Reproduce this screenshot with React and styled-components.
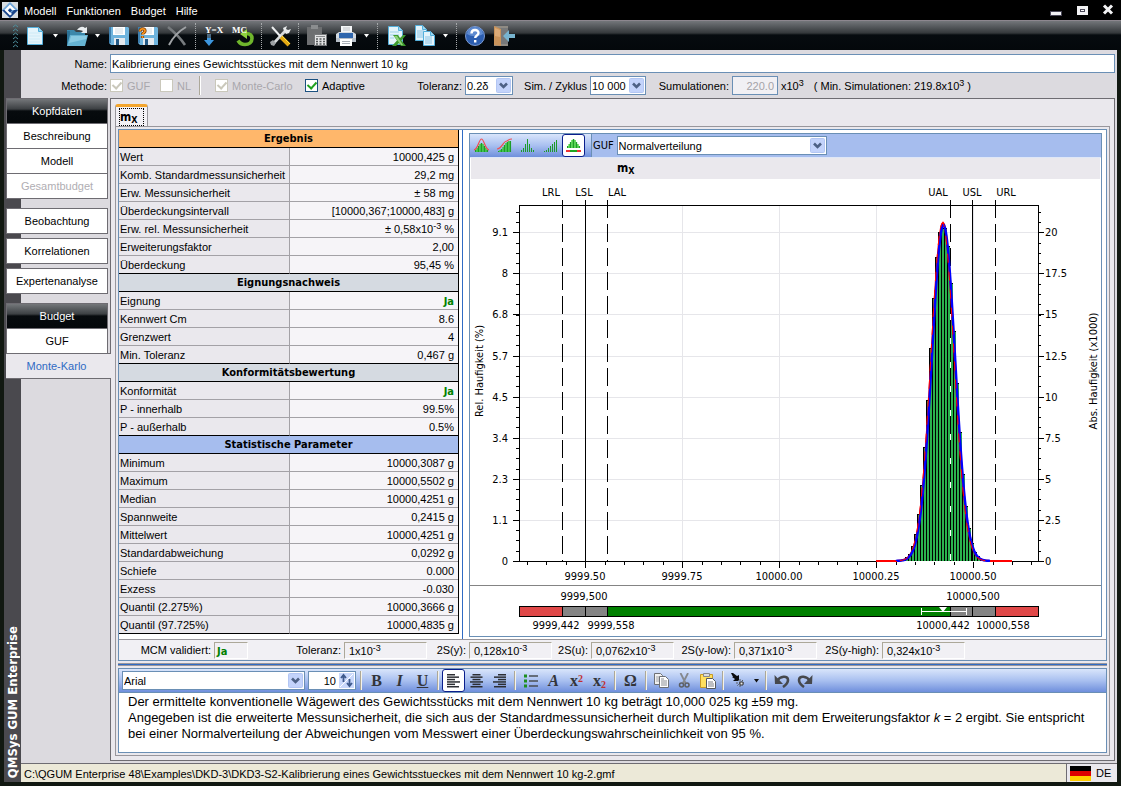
import React from "react";
import styled, { createGlobalStyle, css } from "styled-components";

const UI = `"Liberation Sans", Arial, sans-serif`;
const WIDE = `"DejaVu Sans Condensed", "Noto Sans", sans-serif`;

const Global = createGlobalStyle`
  * { box-sizing: border-box; }
  body { margin: 0; background: #111811; }
  body, button, input, select, table { font-family: ${UI}; font-size: 11px; line-height: 14px; color: #000; }
  button { cursor: pointer; }
  sup, sub { font-size: 9px; line-height: 0; }
  sup { vertical-align: 4px; }
  sub { vertical-align: -2px; }
`;

/* ---------- window ---------- */

const Window = styled.div`
  min-height: 100vh;
  min-width: 1060px;
  display: flex;
  flex-direction: column;
  background: #111811;
`;

const MenuBar = styled.header`
  height: 20px;
  display: flex;
  align-items: center;
  background: #000;
  padding: 0 6px 0 2px;
`;

const MenuList = styled.nav`
  flex: 1;
  display: flex;
  gap: 10px;
  padding: 1px 0 0 6px;
`;

const MenuItem = styled.button`
  border: 0;
  padding: 0;
  background: none;
  color: #fff;
  white-space: nowrap;
`;

const WindowButtons = styled.div`
  display: flex;
  gap: 12px;
`;

const WindowButton = styled.button`
  border: 0;
  padding: 0;
  background: none;
  width: 14px;
  height: 14px;
  svg { display: block; }
`;

const MainToolbar = styled.div`
  height: 30px;
  display: flex;
  align-items: center;
  padding-left: 10px;
  border-top: 1px solid #8d878f;
  background: linear-gradient(#73767a 0, #34383b 12px, #060b0f 14px, #04080b 100%);
`;

const Grip = styled.svg`
  width: 10px;
  height: 26px;
`;

const ToolButton = styled.button`
  border: 0;
  padding: 0;
  background: none;
  width: ${(p) => (p.$caret ? 13 : 29)}px;
  height: 28px;
  display: flex;
  align-items: center;
  justify-content: center;
`;

const DotSeparator = styled.span`
  width: 8px;
  height: 26px;
  display: flex;
  justify-content: center;
  &::before {
    content: "";
    border-left: 1px dotted #a5a8aa;
  }
`;

const Body = styled.div`
  flex: 1;
  display: flex;
  margin: 0 4px 4px;
`;

const Rail = styled.div`
  flex: none;
  width: 17px;
  display: flex;
  align-items: flex-end;
  justify-content: center;
  background: #4a494e;
  padding-bottom: 4px;
`;

const RailLabel = styled.span`
  writing-mode: vertical-rl;
  transform: rotate(180deg);
  color: #fff;
  font-family: ${WIDE};
  font-weight: bold;
  font-size: 13px;
  white-space: nowrap;
`;

const Content = styled.div`
  flex: 1;
  min-width: 0;
  display: flex;
  flex-direction: column;
  background: #dcdadf;
`;

/* ---------- form ---------- */

const NameRow = styled.div`
  display: flex;
  align-items: center;
  padding: 4px 2px 3px 0;
`;

const FormLabel = styled.label`
  flex: none;
  width: 89px;
  padding-right: 3px;
  text-align: right;
`;

const TextInput = styled.input`
  height: 19px;
  min-width: 0;
  flex: ${(p) => (p.$fixed ? "none" : 1)};
  width: ${(p) => (p.$fixed ? "46px" : "auto")};
  border: 1px solid #6a8fb5;
  background: #fff;
  padding: 1px 1px 0;
  &:disabled {
    background: #f1f0f4;
    color: #a5a3a8;
    text-align: right;
    padding-right: 3px;
  }
`;

const MethodRow = styled.div`
  display: grid;
  grid-template-columns: 89px 50px 39px 16px 90px 96px 112px 133px 132px 1fr;
  height: 19px;
  align-items: center;
  margin-bottom: 3px;
  white-space: nowrap;
`;

const CheckLabel = styled.label`
  display: flex;
  align-items: center;
  gap: 4px;
  color: ${(p) => (p.$off ? "#a9a7ac" : "#000")};
`;

const CheckBox = styled.input.attrs({ type: "checkbox" })`
  appearance: none;
  margin: 0;
  width: 13px;
  height: 13px;
  border: 1px solid #1c5180;
  background: #fff;
  display: grid;
  place-items: center;
  &:checked::before {
    content: "";
    width: 4px;
    height: 7px;
    margin-top: -2px;
    border: solid #21a121;
    border-width: 0 2px 2px 0;
    transform: rotate(42deg);
  }
  &:disabled { border-color: #cac8bb; }
  &:disabled:checked::before { border-color: #cac8bb; }
`;

const ThinSeparator = styled.span`
  justify-self: start;
  height: 19px;
  width: 2px;
  background: #aca899;
  border-right: 1px solid #fff;
`;

const Field = styled.label`
  display: flex;
  align-items: center;
  justify-content: flex-end;
  gap: 3px;
`;

const SelectBox = styled.span`
  position: relative;
  flex: none;
  display: block;
  width: ${(p) => p.$width}px;
  height: 19px;
  select {
    appearance: none;
    width: 100%;
    height: 100%;
    border: 1px solid #6a8fb5;
    border-radius: 0;
    background: #fff;
    padding: 1px 1px 0;
  }
  svg {
    position: absolute;
    right: 2px;
    top: 2px;
    pointer-events: none;
  }
`;

const Remarks = styled.div`
  display: flex;
  gap: 10px;
  padding-left: 3px;
`;

/* ---------- side navigation ---------- */

const Workspace = styled.div`
  flex: 1;
  display: flex;
  padding-right: 2px;
  margin-bottom: 2px;
`;

const SideNav = styled.nav`
  position: relative;
  z-index: 1;
  flex: none;
  width: 102px;
  margin: 0 2px 0 -15px;
`;

const NavGroup = styled.div`
  display: flex;
  flex-direction: column;
  border: 1px solid #6e6c72;
  margin-bottom: ${(p) => (p.$tight ? 4 : 9)}px;
  background: #fff;
  ${(p) => p.$open && "border-bottom: 0;"}
`;

const NavHeader = styled.h2`
  margin: 0;
  height: 24px;
  font-size: 11px;
  font-weight: normal;
  line-height: 24px;
  text-align: center;
  color: #fff;
  background: linear-gradient(#74777a, #3c4043 10px, #070b0e 12px, #04080b);
`;

const NavButton = styled.button`
  border: 0;
  border-top: ${(p) => (p.$first ? 0 : 1)}px solid #6e6c72;
  padding: 0;
  height: ${(p) => (p.$first ? 24 : 25)}px;
  background: #fff;
  &:disabled { color: #b0aeb3; }
  ${(p) =>
    p.$current &&
    css`
      height: 26px;
      margin: 0 -4px 0 -1px;
      padding-right: 4px;
      border-bottom: 1px solid #6e6c72;
      background: #eae8ed;
      color: #2f6bc4;
    `}
`;

/* ---------- main panel ---------- */

const Panel = styled.main`
  flex: 1;
  min-width: 0;
  display: flex;
  flex-direction: column;
  border: 1px solid #6e6c72;
  background: #eae8ed;
  padding: 5px 4px 4px;
`;

const Tab = styled.button`
  align-self: flex-start;
  width: 33px;
  height: 22px;
  border: 1px solid #98969c;
  border-top: 3px solid #f3a52e;
  border-bottom: 0;
  border-radius: 3px 3px 0 0;
  background: #f3f1f6;
  padding: 1px 3px 1px;
  span {
    display: block;
    border: 1px dotted #000;
    font-family: ${WIDE};
    font-size: 12px;
    font-weight: bold;
    height: 18px;
    line-height: 16px;
    text-align: left;
  }
`;

const TabPage = styled.section`
  flex: 1;
  display: flex;
  flex-direction: column;
  border: 1px solid #98969c;
  padding: 2px;
`;

const ResultBox = styled.div`
  border: 1px solid #6a8fb5;
  background: #fff;
`;

const ResultRow = styled.div`
  display: flex;
  align-items: stretch;
`;

const VerticalSplitter = styled.div`
  flex: none;
  width: 3px;
  margin-left: 2px;
  border: solid;
  border-width: 0 1px;
  border-color: #c9d3e6 #fff;
  background: #2f6bc4;
`;

const DataTable = styled.table`
  flex: none;
  align-self: flex-start;
  width: 340px;
  table-layout: fixed;
  border-collapse: separate;
  border-spacing: 0;
  border-right: 1px solid #000;
  col:first-child { width: 171px; }
`;

const GroupHead = styled.th`
  height: 18px;
  padding: 0;
  border-bottom: 1px solid #000;
  background: ${(p) => p.$tone};
  font-family: ${WIDE};
  text-align: center;
`;

const Cell = css`
  height: 18px;
  padding: 1px 1px 0;
  border-bottom: 1px solid #a3a1a6;
  white-space: nowrap;
  line-height: 14px;
  tr:last-child > & { border-bottom-color: #000; }
`;

const NameCell = styled.th`
  ${Cell}
  font-weight: normal;
  text-align: left;
  border-right: 1px solid #a3a1a6;
  background: #eae8ed;
`;

const ValueCell = styled.td`
  ${Cell}
  padding-right: 4px;
  text-align: right;
  background: #f6f4f8;
`;

const Verdict = styled.strong`
  font-family: ${WIDE};
  color: #008000;
`;

/* ---------- chart ---------- */

const ChartWrap = styled.div`
  flex: 1;
  min-width: 0;
  padding: 3px 4px 2px 5px;
`;

const ChartFrame = styled.div`
  border: 1px solid #6a8fb5;
`;

const BLUE = "linear-gradient(#d9e5fb, #a9c0f0 50%, #6f8fdc)";

const ChartToolbar = styled.div`
  display: flex;
  align-items: center;
  height: 24px;
  border-bottom: 1px solid #dfe7f7;
  background: #a6bdee;
`;

const ChartButtons = styled.div`
  display: flex;
  height: 23px;
  width: 122px;
  border-right: 1px solid #6a8fb5;
  background: ${BLUE};
`;

const FlatButton = styled.button`
  flex: none;
  width: ${(p) => (p.$caret ? 12 : 23)}px;
  height: 23px;
  display: flex;
  align-items: center;
  justify-content: center;
  border: ${(p) => (p.$active ? "1px solid #0a1e8c" : 0)};
  border-radius: 3px;
  padding: 0;
  background: ${(p) => (p.$active ? "#fff" : "none")};
  color: #33353a;
  font: ${(p) => (p.$italic ? "italic " : "")}bold 16px/20px "Liberation Serif", serif;
  text-decoration: ${(p) => (p.$underline ? "underline" : "none")};
  sup, sub { color: #c03030; font-size: 10px; }
`;

const GufField = styled.label`
  display: flex;
  align-items: center;
  gap: 3px;
  padding-left: 1px;
  font-family: ${WIDE};
`;

const ChartTitle = styled.h3`
  margin: 0 1px;
  height: 21px;
  padding-left: 146px;
  font-family: ${WIDE};
  font-size: 12px;
  line-height: 20px;
  background: #eae8ed;
`;

const Plot = styled.svg`
  display: block;
  width: 100%;
  height: auto;
  font: 11px ${WIDE};
`;

/* ---------- validation strip ---------- */

const ValidationStrip = styled.div`
  display: grid;
  grid-template-columns: 95px 34px 96px 83px 42px 83px 39px 83px 60px 83px 65px 83px;
  align-items: center;
  height: 21px;
  border-top: 1px solid #98969c;
  background: #f1f0f4;
  white-space: nowrap;
  label { text-align: right; padding-right: 3px; }
`;

const Readout = styled.output`
  height: 17px;
  padding: 1px ${(p) => (p.$tight ? 2 : 4)}px 0;
  line-height: 14px;
  border: 1px solid;
  border-color: #aca899 #fff #fff #aca899;
`;

const HorizontalSplitter = styled.div`
  height: 3px;
  margin: 2px 0;
  border: solid;
  border-width: 1px 0;
  border-color: #98969c #fff;
  background: #2f6bc4;
`;

/* ---------- editor ---------- */

const EditorBox = styled.div`
  flex: 1;
  border: 1px solid #6a8fb5;
  background: #fff;
`;

const EditorToolbar = styled.div`
  display: flex;
  align-items: center;
  height: 24px;
  padding-left: 3px;
  border-bottom: 1px solid #6a8fb5;
  background: ${BLUE};
`;

const ToolSeparator = styled.span`
  flex: none;
  width: 2px;
  height: 19px;
  margin: 0 3px;
  background: #aca899;
  border-right: 1px solid #f5f3ea;
`;

const Spinner = styled.label`
  position: relative;
  flex: none;
  width: 48px;
  height: 19px;
  margin: 0 1px 0 3px;
  input {
    width: 100%;
    height: 100%;
    border: 1px solid #6a8fb5;
    padding: 1px 19px 0 0;
    text-align: right;
    background: #fff;
  }
  svg { position: absolute; right: 2px; top: 2px; }
`;

const EditorText = styled.div`
  min-height: 59px;
  padding: 1px 9px 0;
  font: 13px/16px "Liberation Sans", Arial, sans-serif;
  outline: none;
  p { margin: 0; }
`;

/* ---------- status bar ---------- */

const StatusBar = styled.footer`
  display: flex;
  height: 19px;
  border-top: 1px solid #6e6c72;
  background: #ece9d8;
`;

const StatusPath = styled.span`
  flex: 1;
  padding: 3px 3px 0;
`;

const Language = styled.span`
  display: flex;
  align-items: center;
  gap: 5px;
  width: 51px;
  padding-left: 3px;
  border-left: 1px solid #6e6c72;
  background: #eae8ed;
`;

const Flag = styled.span`
  width: 21px;
  height: 15px;
  background: linear-gradient(#000 5px, #dd0000 5px 10px, #ffce00 10px);
`;

/* ---------- icons ---------- */

const Svg = ({ w = 22, h = 22, children }) => (
  <svg width={w} height={h} viewBox={`0 0 ${w} ${h}`} aria-hidden="true">{children}</svg>
);

const Caret = ({ fill = "#fff" }) => <Svg w={7} h={4}><path d="M1 0h5L3.5 3.4z" fill={fill} /></Svg>;

const DropArrow = () => (
  <svg width="15" height="15" viewBox="0 0 15 15" aria-hidden="true">
    <rect x=".5" y=".5" width="14" height="14" rx="1" fill="#c3d3fb" stroke="#b3c6f3" />
    <path d="M4 5.500l3.500 3.500L11 5.500" fill="none" stroke="#4d6185" strokeWidth="2.600" />
  </svg>
);

const AppLogo = () => (
  <Svg w={16} h={16}>
    <rect width="16" height="16" fill="#d5dbe0" />
    <path d="M8 0l8 8-8 8-8-8z" fill="#6fa5d8" />
    <path d="M0 8h4l4 4 4-4h4l-8 8z" fill="#1b4489" />
    <path d="M8 2.500L13.500 8H10L8 6 6 8l4 4-2 1.500L2.500 8z" fill="#fff" />
    <path d="M8 6.500l2 2-2 2-2-2z" fill="#143f86" />
  </Svg>
);

const page = (x, y, w, h) => (
  <g>
    <path d={`M${x + .5} ${y + .5}h${w - 5}l4 4v${h - 5}h-${w - 1}z`} fill="#e4f4fb" stroke="#55b0dc" />
    <path d={`M${x + w - 4.5} ${y + .5}v4h4`} fill="#9fd7ef" stroke="#55b0dc" />
  </g>
);

const NewIcon = () => (
  <Svg>{page(3, 2, 16, 18)}<path d="M5 8h11M5 11h11M5 14h11M5 17h11" stroke="#cdeaf6" /></Svg>
);

const OpenIcon = () => (
  <Svg w={24}>
    <path d="M2 5h7l2 2h9v3H2z" fill="#3c88ab" />
    <path d="M2 21V6h3v13z" fill="#2b7296" />
    <path d="M2 21l3-11h18l-3 11z" fill="#65b3d2" />
    <path d="M4 18l2-7h16l-1 3z" fill="#8acbe3" />
    <path d="M12 5c3-4 6-4 8-2l2-1v6h-6l2-2c-2-1-3-1-6-1z" fill="#e9edf0" />
  </Svg>
);

const SaveIcon = ({ ask }) => (
  <Svg>
    <path d="M1 2h19l1 1v17H3l-2-2z" fill="#6fb4dd" />
    <path d="M1 2h2v16H1z" fill="#3d7fae" />
    <rect x="5" y="2" width="12" height="8" fill="#fff" />
    <path d="M7 4h8M7 6h8M7 8h8" stroke="#d2dde4" />
    <rect x="6" y="13" width="11" height="7" fill="#e5eaee" />
    <rect x="8" y="14" width="3" height="6" fill="#245a86" />
    {ask && <path d="M3 6.500C3 3 8 3 8 6c0 2-2.500 2-2.500 3.500M5.500 11v2" fill="none" stroke="#6b2f00" strokeWidth="3.200" />}
    {ask && <path d="M3 6.500C3 3 8 3 8 6c0 2-2.500 2-2.500 3.500M5.500 11v2" fill="none" stroke="#f6931d" strokeWidth="1.800" />}
  </Svg>
);

const DeleteIcon = () => (
  <Svg>
    <path d="M2 2c5 4 11 9 17 18" fill="none" stroke="#777b7e" strokeWidth="2.600" />
    <path d="M20 2C13 6 7 12 3 20" fill="none" stroke="#a0a3a6" strokeWidth="2" />
  </Svg>
);

const serif = { fontFamily: "Liberation Serif, serif", fontWeight: "bold" };

const SolveIcon = () => (
  <Svg w={24}>
    <text x="3" y="8" fontSize="9" fill="#fff" style={serif}>Y=X</text>
    <path d="M5 10h4M5 12h4" stroke="#8dc4ee" />
    <path d="M5 13h4v2h3l-5 6-5-6h3z" fill="#3d97df" />
  </Svg>
);

const McIcon = () => (
  <Svg w={24}>
    <path d="M15 8.500c4 0 6 2 6 5 0 3.500-3 6-7 6-3.500 0-5.500-1.500-7-4" fill="none" stroke="#6fb52c" strokeWidth="3.600" />
    <path d="M9 9l7-5v10z" fill="#8fd23e" />
    <text x="1" y="8" fontSize="9" fill="#fff" style={serif}>MC</text>
  </Svg>
);

const ToolsIcon = () => (
  <Svg>
    <path d="M4 19L17 5" stroke="#d7dadc" strokeWidth="2.600" />
    <path d="M15 6l-1-3 4-2-1 3 2 1 3-1-2 4-3 1z" fill="#e8eaeb" />
    <path d="M2 20l-1-3 3-2 3 3-2 3z" fill="#9da1a4" />
    <path d="M3 2l9 10" stroke="#eceeef" strokeWidth="2" />
    <path d="M12 12l8 8" stroke="#e5a913" strokeWidth="4" />
    <path d="M13 11l8 8" stroke="#ffe23f" />
  </Svg>
);

const ClipCalcIcon = () => (
  <Svg>
    <rect x="1" y="2" width="15" height="18" fill="#6d6f71" />
    <rect x="5" y="0" width="7" height="4" fill="#8b8d8f" />
    <rect x="8.500" y="9.500" width="12" height="11" fill="#e3e4e5" stroke="#77797b" />
    <path d="M10 11.500h9" stroke="#8a8c8e" />
    <path d="M10 14h9M10 16.500h9M10 19h9" stroke="#55585a" strokeWidth="1.500" strokeDasharray="2 1.500" />
  </Svg>
);

const PrintIcon = () => (
  <Svg>
    <path d="M6 1h11v8H6z" fill="#f5f7f8" />
    <path d="M8 3h7M8 5h7" stroke="#c0c4c8" />
    <path d="M1 9l3-2h14l3 2v8H1z" fill="#d3d9e0" />
    <path d="M4 8h14v5H4z" fill="#2f66ad" />
    <path d="M1 13h20v4H1z" fill="#b6bec7" />
    <path d="M5 14h12v7H5z" fill="#fff" />
    <path d="M7 16.500h8M7 18.500h8" stroke="#a9b0b7" />
  </Svg>
);

const ExcelIcon = () => (
  <Svg>
    {page(3, 1, 15, 19)}
    <path d="M5 7h9M5 10h9M5 13h4" stroke="#9fd0e8" />
    <path d="M8 10h5l2 3 3-3h3l-4.500 5.500L21 21h-5l-2-3-3 3H7l5-5.500z" fill="#3f9b2f" />
    <path d="M9 11h3l6 9h-2z" fill="#8fd37a" />
  </Svg>
);

const PagesIcon = () => (
  <Svg>
    {page(1, 0, 12, 16)}
    <path d="M3 6h7M3 8h7M3 10h7M3 12h7" stroke="#8cc3e3" />
    {page(9, 6, 12, 15)}
    <path d="M11 12h7M11 14h7M11 16h7M11 18h7" stroke="#8cc3e3" />
  </Svg>
);

const HelpIcon = () => (
  <Svg>
    <circle cx="11" cy="11" r="9.500" fill="#2c5eb0" stroke="#7d9bd0" />
    <path d="M3 9a8 7 0 0 1 16 0c-5 3-11 3-16 0z" fill="#5f8bd0" />
    <path d="M7.500 8.500c0-4.500 7-4.500 7-.5 0 2.500-3.300 2.500-3.300 5M11.200 15v2.400" fill="none" stroke="#fff" strokeWidth="2.400" />
  </Svg>
);

const ExitIcon = () => (
  <Svg>
    <rect x="1" y="1" width="14" height="20" fill="#8f8b84" />
    <rect x="3" y="3" width="12" height="16" fill="#77797a" />
    <path d="M1 1l7 3v17l-7-1z" fill="#c9935a" />
    <path d="M2 3l5 2v7l-5-1z" fill="#dbaa77" />
    <path d="M22 9h-6V5l-6 6 6 6v-4h6z" fill="#77b4cf" />
  </Svg>
);

const HEIGHTS = {
  peak: [2, 4, 6, 8, 9, 8, 6, 4, 2],
  rise: [1, 2, 3, 5, 7, 9, 10, 11, 11],
  thin: [2, 4, 8, 13, 8, 4, 2],
  steps: [1, 2, 4, 6, 8, 10, 12],
};

const BarsIcon = ({ kind, curve, spaced, base }) => {
  const bottom = base ? 10 : 14;
  return (
    <Svg w={15} h={15}>
      {HEIGHTS[kind].map((v, i) => (
        <rect
          key={i}
          x={spaced ? 1 + i * 2 : 1 + i * 1.45}
          y={bottom - v}
          width={spaced ? 1 : 1.45}
          height={v}
          fill={i % 2 && !spaced ? "#37d12c" : "#1d9c28"}
        />
      ))}
      {curve && <path d={curve} fill="none" stroke="#f05050" strokeWidth="1.200" />}
      {base && <path d="M0 13h15" stroke="#e33" strokeWidth="2" />}
      {base && <path d="M4 13h7" stroke="#1fa51f" strokeWidth="2" />}
    </Svg>
  );
};

const LinesIcon = ({ align }) => (
  <Svg w={13} h={14}>
    {[8, 12, 8, 13, 8, 12].map((w, i) => {
      const x = align === "left" ? 0 : align === "right" ? 13 - w : (13 - w) / 2;
      return <rect key={i} x={x} y={i * 2.400} width={w} height="1.500" fill="#2c2e33" />;
    })}
  </Svg>
);

const ListIcon = () => (
  <Svg w={14} h={14}>
    <path d="M5 2h9M5 7h9M5 12h9" stroke="#4a4d52" strokeWidth="1.600" />
    <path d="M0 2h3M0 7h3M0 12h3" stroke="#1e8f1e" strokeWidth="3" />
  </Svg>
);

const CopyIcon = () => (
  <Svg w={15} h={15}>
    <path d="M.5.5h6l2 2v9h-8z" fill="#f1f1f1" stroke="#6d7075" />
    <path d="M2 4h5M2 6h5M2 8h5" stroke="#a2a4a8" />
    <path d="M5.500 3.500h6l3 3v8h-9z" fill="#fff" stroke="#6d7075" />
    <path d="M7 8h6M7 10h6M7 12h6M7 6h3" stroke="#8b8e93" />
  </Svg>
);

const CutIcon = () => (
  <Svg w={13} h={15}>
    <path d="M2.500 0l5 10M10 0L5 10" stroke="#85888d" strokeWidth="1.800" />
    <circle cx="3.500" cy="12" r="2" fill="none" stroke="#5c5f64" strokeWidth="1.500" />
    <circle cx="9" cy="12" r="2" fill="none" stroke="#5c5f64" strokeWidth="1.500" />
  </Svg>
);

const PasteIcon = () => (
  <Svg w={16} h={16}>
    <path d="M.5 1.500h12v13H.5z" fill="#ffdf5e" stroke="#c79a26" />
    <path d="M3.500.5h6v3h-6z" fill="#dcdcdc" stroke="#85888d" />
    <path d="M6.500 5.500h6l3 3v7h-9z" fill="#fff" stroke="#55585d" />
    <path d="M8 9h5M8 11h6M8 13h6" stroke="#7c7f84" />
  </Svg>
);

const BrushIcon = () => (
  <Svg w={16} h={15}>
    <path d="M0 0l2 0 4 3 2-1v6H2l2-2-3-2h1z" fill="#0b0c0e" />
    <path d="M7 7l5 5M12 7l-6 6M9 6v8M5 10h9" stroke="#5a5d60" strokeDasharray="2 1" />
    <path d="M9 9h3v3H9z" fill="#e9e9e9" stroke="#333" />
  </Svg>
);

const UndoIcon = ({ flip }) => (
  <Svg w={16} h={14}>
    <g transform={flip ? "matrix(-1 0 0 1 16 0)" : undefined}>
      <path d="M3 7c3-5 11-6 11-1 0 3-2 5-5 7" fill="none" stroke="#46484d" strokeWidth="2.600" />
      <path d="M.5 1l.5 9h8z" fill="#46484d" />
    </g>
  </Svg>
);

/* ---------- data ---------- */

const GROUPS = [
  {
    title: "Ergebnis",
    tone: "#ffb76b",
    rows: [
      ["Wert", "10000,425 g"],
      ["Komb. Standardmessunsicherheit", "29,2 mg"],
      ["Erw. Messunsicherheit", "± 58 mg"],
      ["Überdeckungsintervall", "[10000,367;10000,483] g"],
      ["Erw. rel. Messunsicherheit", <>± 0,58x10<sup>-3</sup> %</>],
      ["Erweiterungsfaktor", "2,00"],
      ["Überdeckung", "95,45 %"],
    ],
  },
  {
    title: "Eignungsnachweis",
    tone: "#d5dae1",
    rows: [
      ["Eignung", <Verdict>Ja</Verdict>],
      ["Kennwert Cm", "8.6"],
      ["Grenzwert", "4"],
      ["Min. Toleranz", "0,467 g"],
    ],
  },
  {
    title: "Konformitätsbewertung",
    tone: "#d5dae1",
    rows: [
      ["Konformität", <Verdict>Ja</Verdict>],
      ["P - innerhalb", "99.5%"],
      ["P - außerhalb", "0.5%"],
    ],
  },
  {
    title: "Statistische Parameter",
    tone: "#a6bdee",
    rows: [
      ["Minimum", "10000,3087 g"],
      ["Maximum", "10000,5502 g"],
      ["Median", "10000,4251 g"],
      ["Spannweite", "0,2415 g"],
      ["Mittelwert", "10000,4251 g"],
      ["Standardabweichung", "0,0292 g"],
      ["Schiefe", "0.000"],
      ["Exzess", "-0.030"],
      ["Quantil (2.275%)", "10000,3666 g"],
      ["Quantil (97.725%)", "10000,4835 g"],
    ],
  },
];

const READOUTS = [
  ["MCM validiert:", <Verdict>Ja</Verdict>],
  ["Toleranz:", <>1x10<sup>-3</sup></>],
  ["2S(y):", <>0,128x10<sup>-3</sup></>],
  ["2S(u):", <>0,0762x10<sup>-3</sup></>],
  ["2S(y-low):", <>0,371x10<sup>-3</sup></>],
  ["2S(y-high):", <>0,324x10<sup>-3</sup></>],
];

/* ---------- chart drawing ---------- */

const BASE = 561;
const bell = (x, mu, height) => BASE - height * Math.exp(-((x - mu) ** 2) / (2 * 11.6 ** 2));
const curvePath = (from, to, mu, height) => {
  let d = `M${from} ${BASE}`;
  for (let x = from; x <= to; x += 1) d += `L${x} ${bell(x, mu, height).toFixed(1)}`;
  return d;
};
const BARS = Array.from({ length: 28 }, (_, i) => 902 + i * 3);
const Y_TICKS = [0, 1, 2, 3, 4, 5, 6, 7, 8].map((i) => Math.round(BASE - i * 41.1));
const LEFT = ["0", "1.1", "2.3", "3.4", "4.5", "5.7", "6.8", "8", "9.1"];
const RIGHT = ["0", "2.5", "5", "7.5", "10", "12.5", "15", "17.5", "20"];
const X_TICKS = [[585, "9999.50"], [682, "9999.75"], [779, "10000.00"], [876, "10000.25"], [973, "10000.50"]];
const MINOR_Y = Array.from({ length: 35 }, (_, i) => BASE - i * 10.27);
const MINOR_X = Array.from({ length: 27 }, (_, i) => 527 + i * 19.4);
const LIMITS = [
  [562, "LRL", 551, true], [585, "LSL", 584, false], [607, "LAL", 617, true],
  [950, "UAL", 938, true], [972, "USL", 972, false], [995, "URL", 1006, true],
];
const BANDS = [
  [519, 562, "#e04848"], [562, 585, "#848484"], [585, 607, "#848484"], [607, 950, "#008000"],
  [950, 972, "#848484"], [972, 995, "#848484"], [995, 1038, "#e04848"],
];

function Histogram() {
  return (
    <Plot viewBox="470 179 631 457" role="img" aria-label="Histogramm">
      <g stroke="#e6e6ea" shapeRendering="crispEdges">
        {Y_TICKS.slice(1).map((y) => <path key={y} d={`M520 ${y + .5}H1038`} />)}
        {X_TICKS.map(([x]) => <path key={x} d={`M${x + .5} 206V561`} />)}
      </g>
      <g shapeRendering="crispEdges">
        {BARS.map((x) => {
          const side = x < 943 ? 3 : 0;
          const y = Math.round(bell(x + side, 943, 334));
          return (
            <g key={x}>
              <rect x={x} y={y} width="3" height={BASE - y} fill="#000" />
              <rect x={x + 1} y={y + 1} width="2" height={Math.max(0, BASE - y - 1)} fill="#2bb24e" />
            </g>
          );
        })}
        <path d="M950.500 290V561" stroke="#fff" />
      </g>
      <g stroke="#000" fill="none" shapeRendering="crispEdges">
        <path d="M519.500 561V205.500H1038.500V561" />
        <path d="M513 561.500H876M1012 561.500H1044" />
        {Y_TICKS.slice(1).map((y) => <path key={y} d={`M513 ${y + .5}h6M1039 ${y + .5}h5`} />)}
        {MINOR_Y.map((y) => <path key={y} d={`M516 ${Math.round(y) + .5}h3M1039 ${Math.round(y) + .5}h2`} />)}
        {X_TICKS.map(([x]) => <path key={x} d={`M${x + .5} 562v6`} />)}
        {MINOR_X.map((x) => <path key={x} d={`M${Math.round(x) + .5} 562v3`} />)}
        {LIMITS.map(([x, , , dashed]) => (
          <path key={x} d={`M${x + .5} 200V561`} strokeDasharray={dashed ? "18 6" : undefined} />
        ))}
      </g>
      <path d={curvePath(876, 1012, 943, 338)} fill="none" stroke="#f00" strokeWidth="2" />
      <path d={curvePath(897, 990, 943.5, 336)} fill="none" stroke="#00f" strokeWidth="2.400" />
      <path d={curvePath(900, 986, 942.5, 338)} fill="none" stroke="#f00" strokeWidth="1" strokeDasharray="9 9" />
      <g textAnchor="middle">
        {LIMITS.map(([, name, at]) => <text key={name} x={at} y="196">{name}</text>)}
        {X_TICKS.map(([x, t]) => <text key={t} x={x} y="580">{t}</text>)}
        <text x="584" y="600">9999,500</text>
        <text x="973" y="600">10000,500</text>
        <text x="556" y="629">9999,442</text>
        <text x="611" y="629">9999,558</text>
        <text x="943" y="629">10000,442</text>
        <text x="1003" y="629">10000,558</text>
        <text transform="translate(483 371) rotate(-90)">Rel. Haufigkeit (%)</text>
        <text transform="translate(1097 371) rotate(-90)">Abs. Haufigkeit (x1000)</text>
      </g>
      <g textAnchor="end">{LEFT.map((t, i) => <text key={t} x="508" y={Y_TICKS[i] + 4}>{t}</text>)}</g>
      <g>{RIGHT.map((t, i) => <text key={t} x="1045" y={Y_TICKS[i] + 4}>{t}</text>)}</g>
      <g shapeRendering="crispEdges">
        <path d="M470 585.500H1101" stroke="#848484" />
        {BANDS.map(([a, b, fill]) => (
          <rect key={a} x={a + .5} y="606.500" width={b - a} height="10" fill={fill} stroke="#000" />
        ))}
        <path d="M921.500 608v7M966.500 608v7M921 611.500h45" stroke="#fff" />
      </g>
      <path d="M939 607h8l-4 5z" fill="#fff" />
    </Plot>
  );
}

/* ---------- composed parts ---------- */

const Choice = ({ width, value, label }) => (
  <SelectBox $width={width}>
    <select aria-label={label} defaultValue={value}><option>{value}</option></select>
    <DropArrow />
  </SelectBox>
);

const Tool = ({ label, children }) => <ToolButton aria-label={label}>{children}</ToolButton>;
const ToolCaret = ({ label }) => <ToolButton $caret aria-label={label}><Caret /></ToolButton>;
const Nav = (props) => <NavButton type="button" {...props} />;

export default function App() {
  return (
    <Window>
      <Global />
      <MenuBar>
        <AppLogo />
        <MenuList>
          {["Modell", "Funktionen", "Budget", "Hilfe"].map((m) => <MenuItem key={m}>{m}</MenuItem>)}
        </MenuList>
        <WindowButtons>
          <WindowButton aria-label="Minimieren"><Svg w={14} h={14}><rect x="1.500" y="8.500" width="11" height="4" fill="#f2f2f4" stroke="#4a4858" /></Svg></WindowButton>
          <WindowButton aria-label="Maximieren">
            <Svg w={14} h={14}><rect x="2" y="3" width="11" height="9" fill="#f2f2f4" /><rect x="5.500" y="6.500" width="4" height="2" fill="#fff" stroke="#4a4858" /></Svg>
          </WindowButton>
          <WindowButton aria-label="Schließen"><Svg w={14} h={14}><path d="M3 2.500l8 8M11 2.500l-8 8" stroke="#f2f2f4" strokeWidth="3" /></Svg></WindowButton>
        </WindowButtons>
      </MenuBar>
      <MainToolbar>
        <Grip viewBox="0 0 10 26" aria-hidden="true">
          <path d="M3 4l2.500-2L8 4M3 8l2.500-2L8 8M3 12l2.500-2L8 12M3 16l2.500-2L8 16M3 20l2.500-2L8 20M3 24l2.500-2L8 24" fill="none" stroke="#4f8f9d" />
        </Grip>
        <Tool label="Neu"><NewIcon /></Tool><ToolCaret label="Neu, Auswahl" />
        <Tool label="Öffnen"><OpenIcon /></Tool><ToolCaret label="Öffnen, Auswahl" />
        <Tool label="Speichern"><SaveIcon /></Tool>
        <Tool label="Speichern unter"><SaveIcon ask /></Tool>
        <Tool label="Löschen"><DeleteIcon /></Tool>
        <DotSeparator />
        <Tool label="Auswerten"><SolveIcon /></Tool>
        <Tool label="Monte-Carlo starten"><McIcon /></Tool>
        <DotSeparator />
        <Tool label="Einstellungen"><ToolsIcon /></Tool>
        <DotSeparator />
        <Tool label="Rechner"><ClipCalcIcon /></Tool>
        <Tool label="Drucken"><PrintIcon /></Tool><ToolCaret label="Drucken, Auswahl" />
        <DotSeparator />
        <Tool label="Excel"><ExcelIcon /></Tool>
        <Tool label="Kopieren"><PagesIcon /></Tool><ToolCaret label="Kopieren, Auswahl" />
        <DotSeparator />
        <Tool label="Hilfe"><HelpIcon /></Tool>
        <Tool label="Beenden"><ExitIcon /></Tool>
      </MainToolbar>

      <Body>
        <Rail><RailLabel>QMSys GUM Enterprise</RailLabel></Rail>
        <Content>
          <NameRow>
            <FormLabel htmlFor="name">Name:</FormLabel>
            <TextInput id="name" defaultValue="Kalibrierung eines Gewichtsstückes mit dem Nennwert 10 kg" />
          </NameRow>
          <MethodRow>
            <FormLabel as="span">Methode:</FormLabel>
            <CheckLabel $off><CheckBox defaultChecked disabled />GUF</CheckLabel>
            <CheckLabel $off><CheckBox disabled />NL</CheckLabel>
            <ThinSeparator />
            <CheckLabel $off><CheckBox defaultChecked disabled />Monte-Carlo</CheckLabel>
            <CheckLabel><CheckBox defaultChecked />Adaptive</CheckLabel>
            <Field>Toleranz:<Choice width={48} value="0.2δ" label="Toleranz" /></Field>
            <Field>Sim. / Zyklus<Choice width={56} value="10 000" label="Sim. / Zyklus" /></Field>
            <Field>Sumulationen:<TextInput $fixed disabled defaultValue="220.0" /></Field>
            <Remarks>
              <span>x10<sup>3</sup></span>
              <span>( Min. Simulationen: 219.8x10<sup>3</sup> )</span>
            </Remarks>
          </MethodRow>

          <Workspace>
            <SideNav>
              <NavGroup>
                <NavHeader>Kopfdaten</NavHeader>
                <Nav>Beschreibung</Nav>
                <Nav>Modell</Nav>
                <Nav disabled>Gesamtbudget</Nav>
              </NavGroup>
              <NavGroup $tight><Nav $first>Beobachtung</Nav></NavGroup>
              <NavGroup $tight><Nav $first>Korrelationen</Nav></NavGroup>
              <NavGroup><Nav $first>Expertenanalyse</Nav></NavGroup>
              <NavGroup $open>
                <NavHeader>Budget</NavHeader>
                <Nav>GUF</Nav>
                <Nav $current aria-current="page">Monte-Karlo</Nav>
              </NavGroup>
            </SideNav>

            <Panel>
              <Tab><span>m<sub>X</sub></span></Tab>
              <TabPage>
                <ResultBox>
                  <ResultRow>
                    <DataTable>
                      <colgroup><col /><col /></colgroup>
                      {GROUPS.map((g) => (
                        <tbody key={g.title}>
                          <tr><GroupHead colSpan={2} $tone={g.tone}>{g.title}</GroupHead></tr>
                          {g.rows.map(([name, value]) => (
                            <tr key={name}><NameCell scope="row">{name}</NameCell><ValueCell>{value}</ValueCell></tr>
                          ))}
                        </tbody>
                      ))}
                    </DataTable>
                    <VerticalSplitter />
                    <ChartWrap>
                      <ChartFrame>
                        <ChartToolbar>
                          <ChartButtons>
                            <FlatButton aria-label="Dichte"><BarsIcon kind="peak" curve="M0 12C4 11 5 1 7.500 1S11 11 15 12" /></FlatButton>
                            <FlatButton aria-label="Verteilungsfunktion"><BarsIcon kind="rise" curve="M0 11C5 11 6 3 10 3 12 1 13 1 15 1" /></FlatButton>
                            <FlatButton aria-label="Histogramm"><BarsIcon kind="thin" spaced /></FlatButton>
                            <FlatButton aria-label="Summe"><BarsIcon kind="steps" spaced /></FlatButton>
                            <FlatButton $active aria-label="Histogramm mit Grenzen"><BarsIcon kind="peak" base /></FlatButton>
                          </ChartButtons>
                          <GufField>GUF<Choice width={210} value="Normalverteilung" label="GUF" /></GufField>
                        </ChartToolbar>
                        <ChartTitle>m<sub>X</sub></ChartTitle>
                        <Histogram />
                      </ChartFrame>
                    </ChartWrap>
                  </ResultRow>
                  <ValidationStrip>
                    {READOUTS.map(([label, value], i) => (
                      <React.Fragment key={label}>
                        <label htmlFor={`readout-${i}`}>{label}</label>
                        <Readout id={`readout-${i}`} $tight={i === 0}>{value}</Readout>
                      </React.Fragment>
                    ))}
                  </ValidationStrip>
                </ResultBox>
                <HorizontalSplitter />
                <EditorBox>
                  <EditorToolbar>
                    <Choice width={183} value="Arial" label="Schriftart" />
                    <Spinner>
                      <input aria-label="Schriftgröße" defaultValue="10" />
                      <svg width="15" height="15" viewBox="0 0 15 15" aria-hidden="true">
                        <rect width="15" height="15" fill="#c9d8fb" />
                        <path d="M1 14L14 1" stroke="#fff" />
                        <path d="M4.500 9V3M2 5l2.500-3L7 5M10.500 6v6M8 10l2.500 3 2.500-3" fill="none" stroke="#3f5a8c" strokeWidth="1.800" />
                      </svg>
                    </Spinner>
                    <ToolSeparator />
                    <FlatButton aria-label="Fett">B</FlatButton>
                    <FlatButton $italic aria-label="Kursiv">I</FlatButton>
                    <FlatButton $underline aria-label="Unterstrichen">U</FlatButton>
                    <ToolSeparator />
                    <FlatButton $active aria-label="Linksbündig"><LinesIcon align="left" /></FlatButton>
                    <FlatButton aria-label="Zentriert"><LinesIcon align="center" /></FlatButton>
                    <FlatButton aria-label="Rechtsbündig"><LinesIcon align="right" /></FlatButton>
                    <ToolSeparator />
                    <FlatButton aria-label="Aufzählung"><ListIcon /></FlatButton>
                    <FlatButton $italic aria-label="Schrift">A</FlatButton>
                    <FlatButton aria-label="Hochgestellt"><span>x<sup>2</sup></span></FlatButton>
                    <FlatButton aria-label="Tiefgestellt"><span>x<sub>2</sub></span></FlatButton>
                    <ToolSeparator />
                    <FlatButton aria-label="Symbol">Ω</FlatButton>
                    <ToolSeparator />
                    <FlatButton aria-label="Kopieren"><CopyIcon /></FlatButton>
                    <FlatButton aria-label="Ausschneiden"><CutIcon /></FlatButton>
                    <FlatButton aria-label="Einfügen"><PasteIcon /></FlatButton>
                    <ToolSeparator />
                    <FlatButton aria-label="Format"><BrushIcon /></FlatButton>
                    <FlatButton $caret aria-label="Format, Auswahl"><Caret fill="#111" /></FlatButton>
                    <ToolSeparator />
                    <FlatButton aria-label="Rückgängig"><UndoIcon /></FlatButton>
                    <FlatButton aria-label="Wiederholen"><UndoIcon flip /></FlatButton>
                  </EditorToolbar>
                  <EditorText contentEditable suppressContentEditableWarning role="textbox" aria-multiline="true" aria-label="Bemerkung">
                    <p>Der ermittelte konventionelle Wägewert des Gewichtsstücks mit dem Nennwert 10 kg beträgt 10,000 025 kg ±59 mg.</p>
                    <p>
                      Angegeben ist die erweiterte Messunsicherheit, die sich aus der Standardmessunsicherheit durch Multiplikation mit dem
                      Erweiterungsfaktor <em>k</em> = 2 ergibt. Sie entspricht
                      <br />
                      bei einer Normalverteilung der Abweichungen vom Messwert einer Überdeckungswahrscheinlichkeit von 95 %.
                    </p>
                  </EditorText>
                </EditorBox>
              </TabPage>
            </Panel>
          </Workspace>

          <StatusBar>
            <StatusPath>C:\QGUM Enterprise 48\Examples\DKD-3\DKD3-S2-Kalibrierung eines Gewichtsstueckes mit dem Nennwert 10 kg-2.gmf</StatusPath>
            <Language><Flag />DE</Language>
          </StatusBar>
        </Content>
      </Body>
    </Window>
  );
}
